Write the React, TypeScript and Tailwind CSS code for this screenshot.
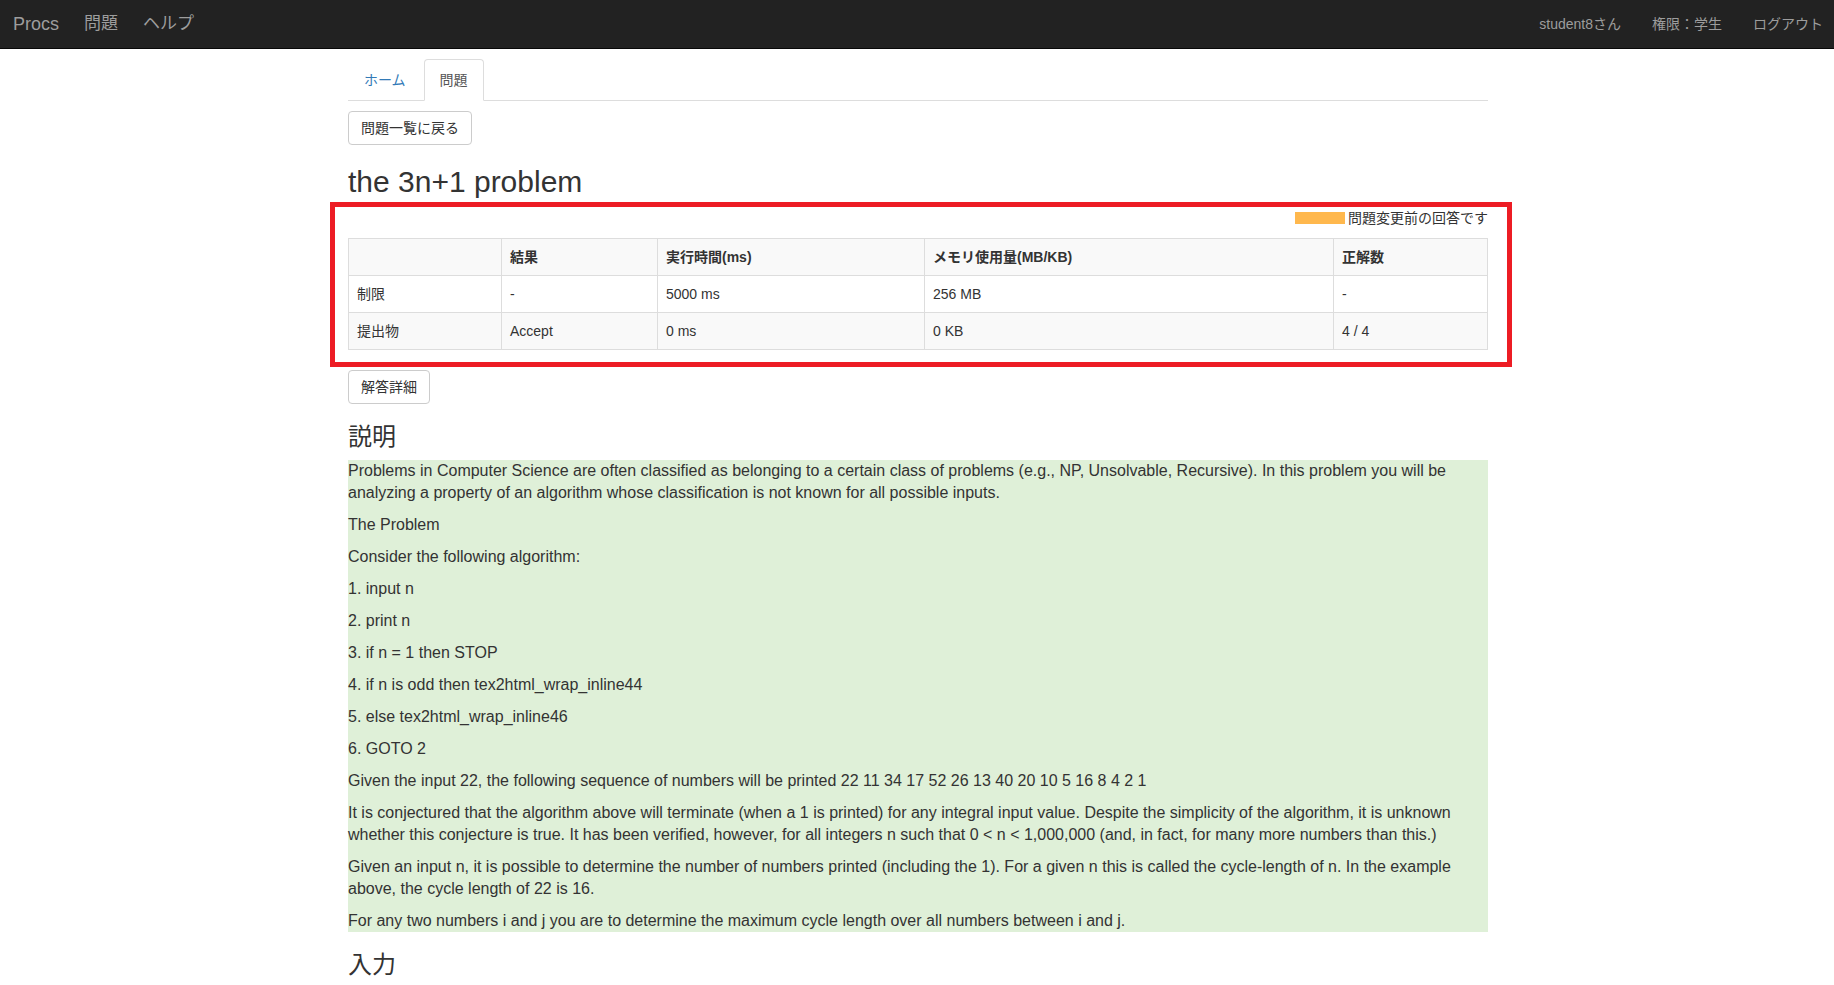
import React from 'react';

const font = { fontFamily: '"Liberation Sans", "Noto Sans CJK JP", sans-serif' };

const paragraphs = [
  'Problems in Computer Science are often classified as belonging to a certain class of problems (e.g., NP, Unsolvable, Recursive). In this problem you will be analyzing a property of an algorithm whose classification is not known for all possible inputs.',
  'The Problem',
  'Consider the following algorithm:',
  '1. input n',
  '2. print n',
  '3. if n = 1 then STOP',
  '4. if n is odd then tex2html_wrap_inline44',
  '5. else tex2html_wrap_inline46',
  '6. GOTO 2',
  'Given the input 22, the following sequence of numbers will be printed 22 11 34 17 52 26 13 40 20 10 5 16 8 4 2 1',
  'It is conjectured that the algorithm above will terminate (when a 1 is printed) for any integral input value. Despite the simplicity of the algorithm, it is unknown whether this conjecture is true. It has been verified, however, for all integers n such that 0 < n < 1,000,000 (and, in fact, for many more numbers than this.)',
  'Given an input n, it is possible to determine the number of numbers printed (including the 1). For a given n this is called the cycle-length of n. In the example above, the cycle length of 22 is 16.',
  'For any two numbers i and j you are to determine the maximum cycle length over all numbers between i and j.',
];

const rows = [
  { label: '制限', result: '-', time: '5000 ms', memory: '256 MB', score: '-' },
  { label: '提出物', result: 'Accept', time: '0 ms', memory: '0 KB', score: '4 / 4' },
];

function Navbar() {
  return (
    <nav className="h-[49px] bg-[#222] border-b border-[#080808] flex items-center justify-between text-[#9d9d9d]">
      <div className="flex items-center gap-[25px] pl-[13px]">
        <span className="text-[18px]">Procs</span>
        <span className="text-[17px]">問題</span>
        <span className="text-[17px]">ヘルプ</span>
      </div>
      <div className="flex items-center gap-[31px] pr-[11px] text-[14px]">
        <span>student8さん</span>
        <span>権限：学生</span>
        <span>ログアウト</span>
      </div>
    </nav>
  );
}

function Tabs() {
  return (
    <ul className="flex border-b border-[#ddd] text-[14px]">
      <li className="-mb-px mr-[2px]">
        <a className="block px-[15px] py-[10px] leading-5 border border-transparent rounded-t text-[#337ab7]">ホーム</a>
      </li>
      <li className="-mb-px mr-[2px]">
        <a className="block px-[15px] py-[10px] leading-5 border border-[#ddd] border-b-white bg-white rounded-t text-[#555]">問題</a>
      </li>
    </ul>
  );
}

function Button({ children }: { children: React.ReactNode }) {
  return (
    <button className="px-[12px] py-[6px] leading-5 text-[14px] text-[#333] bg-white border border-[#ccc] rounded">
      {children}
    </button>
  );
}

function ResultTable() {
  const th = 'border border-[#ddd] px-[8px] py-[8px] leading-5 text-left font-bold';
  const td = 'border border-[#ddd] px-[8px] py-[8px] leading-5';
  return (
    <div className="relative">
      <div className="flex justify-end items-center gap-[3px] h-5 text-[14px] text-[#333]">
        <span className="inline-block w-[50px] h-[12px] bg-[#ffb84d]" />
        <span>問題変更前の回答です</span>
      </div>
      <table className="mt-[10px] w-full table-fixed border-collapse text-[14px] text-[#333]">
        <colgroup>
          <col className="w-[153px]" />
          <col className="w-[156px]" />
          <col className="w-[267px]" />
          <col className="w-[409px]" />
          <col className="w-[154px]" />
        </colgroup>
        <thead>
          <tr className="bg-[#f9f9f9]">
            <th className={th}></th>
            <th className={th}>結果</th>
            <th className={th}>実行時間(ms)</th>
            <th className={th}>メモリ使用量(MB/KB)</th>
            <th className={th}>正解数</th>
          </tr>
        </thead>
        <tbody>
          {rows.map((r, i) => (
            <tr key={r.label} className={i % 2 === 1 ? 'bg-[#f9f9f9]' : 'bg-white'}>
              <td className={td}>{r.label}</td>
              <td className={td}>{r.result}</td>
              <td className={td}>{r.time}</td>
              <td className={td}>{r.memory}</td>
              <td className={td}>{r.score}</td>
            </tr>
          ))}
        </tbody>
      </table>
      <div className="absolute -top-[6px] -left-[18px] -right-[24px] -bottom-[17px] border-[5px] border-[#ed1c24] pointer-events-none" />
    </div>
  );
}

export default function App() {
  return (
    <div className="min-h-screen bg-white text-[#333]" style={font}>
      <Navbar />
      <div className="w-[1170px] mx-auto pl-[16px] pr-[14px] pt-[10px]">
        <Tabs />
        <div className="mt-[10px]">
          <Button>問題一覧に戻る</Button>
        </div>
        <h2 className="mt-[20px] mb-[10px] text-[30px] leading-[33px]">the 3n+1 problem</h2>
        <ResultTable />
        <div className="mt-[20px]">
          <Button>解答詳細</Button>
        </div>
        <h3 className="mt-[20px] mb-[10px] text-[24px] leading-[26px]">説明</h3>
        <div className="bg-[#dff0d8] text-[16px] leading-[22px]">
          {paragraphs.map((p) => (
            <p key={p} className="mb-[10px] last:mb-0">{p}</p>
          ))}
        </div>
        <h3 className="mt-[20px] mb-[10px] text-[24px] leading-[26px]">入力</h3>
      </div>
    </div>
  );
}
